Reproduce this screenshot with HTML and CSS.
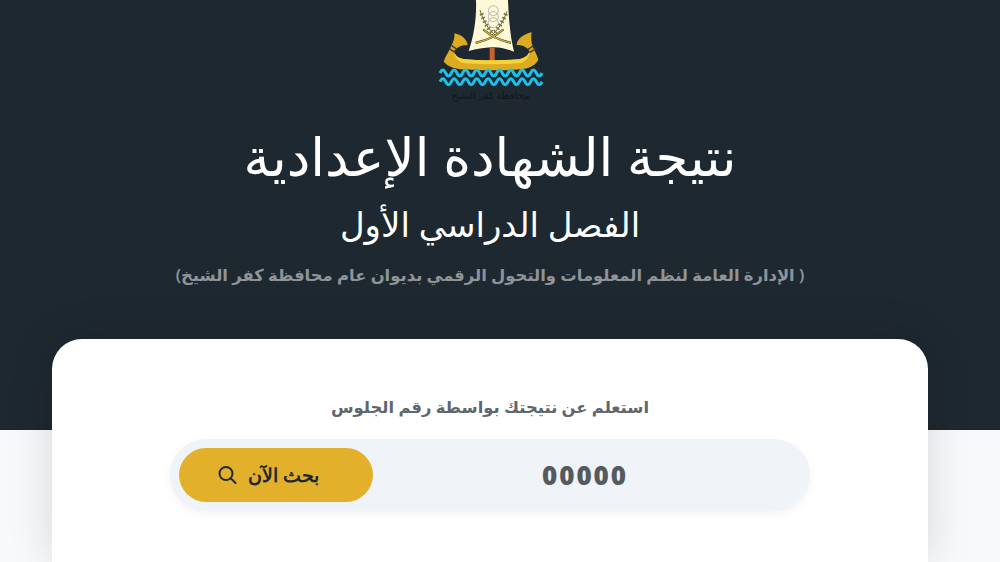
FILE: index.html
```html
<!DOCTYPE html>
<html lang="ar" dir="rtl">
<head>
  <meta charset="UTF-8" />
  <meta name="viewport" content="width=device-width, initial-scale=1.0" />
  <title>نتيجة الشهادة الإعدادية</title>
  <link rel="stylesheet" href="styles.css">
</head>
<body>
  <div class="hero">
    <svg class="logo" width="140" height="110" viewBox="0 0 420 330">
      <!-- sail -->
      <path d="M168 0 H264 C266 50 270 105 282 155 C255 145 235 140 215 142 C190 143 170 147 146 153 C163 105 170 50 168 0 Z" fill="#fdf9d8"/>
      <rect x="209" y="142" width="15" height="44" fill="#c8622a"/>
      <!-- rings and branches -->
      <g fill="none" stroke="#c4c4ba" stroke-width="3.500">
        <circle cx="220" cy="32" r="15"/>
        <circle cx="220" cy="50" r="15"/>
        <circle cx="220" cy="68" r="15"/>
      </g>
      <g fill="none">
        <path d="M226 106 C205 90 190 62 180 30 M214 106 C235 90 250 64 261 34" stroke="#6e6b3e" stroke-width="3"/>
        <path d="M216 96 C201 82 190 60 183 36 M224 96 C238 82 249 62 258 40" stroke="#77744a" stroke-width="12" stroke-dasharray="5 7"/>
      </g>
      <!-- oars -->
      <path d="M170 128 C195 122 228 108 248 90 M270 128 C245 122 212 108 192 90" fill="none" stroke="#3d3722" stroke-width="7" stroke-linecap="round"/>
      <path d="M170 128 C195 122 228 108 248 90 M270 128 C245 122 212 108 192 90" fill="none" stroke="#d3ad3a" stroke-width="4.500" stroke-linecap="round"/>
      <!-- boat -->
      <path d="M103 100 C124 104 142 118 143 136 C124 134 110 142 102 154 C106 168 114 174 130 177 C170 182 260 182 300 177 C316 174 324 166 329 154 C322 142 308 134 290 135 C291 118 310 102 335 97 C332 118 334 134 342 148 C348 160 352 170 355 179 C347 197 325 206 300 208 C260 212 170 212 125 208 C100 206 80 198 71 184 C76 170 86 156 92 142 C98 128 105 116 103 100 Z" fill="#dcab22"/>
      <path d="M102 154 C106 168 114 174 130 177 C170 182 260 182 300 177 C316 174 324 166 329 154 C328 172 318 186 300 189 C260 194 170 194 130 189 C114 186 104 172 102 154 Z" fill="#f4d43a"/>
      <path d="M88 146 L106 158 M95 137 L112 149 M341 137 L323 149 M347 146 L329 158" stroke="#4b3518" stroke-width="4"/>
      <!-- water -->
      <g fill="none" stroke="#1cc0e8" stroke-width="9">
        <path d="M60 219 q8.500 -18 17 0 t17 0 t17 0 t17 0 t17 0 t17 0 t17 0 t17 0 t17 0 t17 0 t17 0 t17 0 t17 0 t17 0 t17 0 t17 0 t17 0 t17 0"/>
        <path d="M60 245 q8.500 -18 17 0 t17 0 t17 0 t17 0 t17 0 t17 0 t17 0 t17 0 t17 0 t17 0 t17 0 t17 0 t17 0 t17 0 t17 0 t17 0 t17 0 t17 0"/>
      </g>
      <text x="212" y="296" text-anchor="middle" class="logo-text">محافظة كفر الشيخ</text>
    </svg>
    <h1>نتيجة الشهادة الإعدادية</h1>
    <h2>الفصل الدراسي الأول</h2>
    <p class="dept">( الإدارة العامة لنظم المعلومات والتحول الرقمي بديوان عام محافظة كفر الشيخ)</p>
  </div>
  <div class="page">
    <div class="card">
      <label class="label-title" for="seat">استعلم عن نتيجتك بواسطة رقم الجلوس</label>
      <form class="search">
        <input type="text" id="seat" placeholder="00000" />
        <button type="button">
          <span>بحث الآن</span>
          <svg width="20" height="20" viewBox="0 0 20 20" fill="none" stroke="#1f2931" stroke-width="2" stroke-linecap="round"><circle cx="9" cy="8.500" r="6.500"/><path d="M14 13.500 L18.500 18"/></svg>
        </button>
      </form>
    </div>
  </div>
</body>
</html>
```
FILE: styles.css
```css
* {
  box-sizing: border-box;
}
html, body {
  height: 562px;
  overflow: hidden;
}
body {
  margin: 0;
  font-family: "Noto Sans", "DejaVu Sans", sans-serif;
  background-color: #f8f9fa;
}
.hero {
  height: 430px;
  padding-right: 20px;
  background-color: #1e2830;
  text-align: center;
  color: white;
}
.logo {
  display: block;
  margin: 0 auto;
}
.logo-text {
  font-size: 30px;
  fill: #12171b;
}
h1 {
  margin: 16px 0 0;
  font-size: 53px;
  line-height: 60px;
  font-weight: 400;
}
h2 {
  margin: 16px 0 0;
  font-size: 34px;
  line-height: 44px;
  font-weight: 400;
}
.dept {
  margin: 17px 0 0;
  font-size: 16.400px;
  line-height: 24px;
  font-weight: 600;
  color: #8f9499;
}
.page {
  margin-top: -91px;
  padding: 0 72px 0 52px;
}
.card {
  height: 223px;
  background: white;
  border-radius: 30px 30px 0 0;
  padding-top: 55px;
  box-shadow: 0 0 45px rgba(0,0,0,0.14);
}
.label-title {
  display: block;
  text-align: center;
  font-size: 16.400px;
  line-height: 26px;
  font-weight: 600;
  color: #5f666d;
}
.search {
  display: flex;
  align-items: center;
  width: 640px;
  height: 72px;
  margin: 19px auto 0;
  padding: 9px;
  background: #f0f3f8;
  border-radius: 36px;
  box-shadow: 0 3px 9px rgba(0,0,0,0.05);
}
.search input {
  flex: 1;
  min-width: 0;
  padding: 0 4px 0 0;
  border: none;
  background: none;
  text-align: center;
  font-family: "Open Sans", sans-serif;
  font-size: 26px;
  font-weight: 800;
  letter-spacing: 2px;
  outline: none;
}
.search input::placeholder {
  color: #555a5f;
  opacity: 1;
}
.search button {
  display: flex;
  align-items: center;
  justify-content: center;
  gap: 11px;
  width: 194px;
  height: 54px;
  padding: 0 16px 0 0;
  border: none;
  border-radius: 27px;
  background-color: #e2b02a;
  color: #1f2931;
  font-family: "Noto Sans", sans-serif;
  font-size: 19px;
  font-weight: 700;
  cursor: pointer;
}
```
